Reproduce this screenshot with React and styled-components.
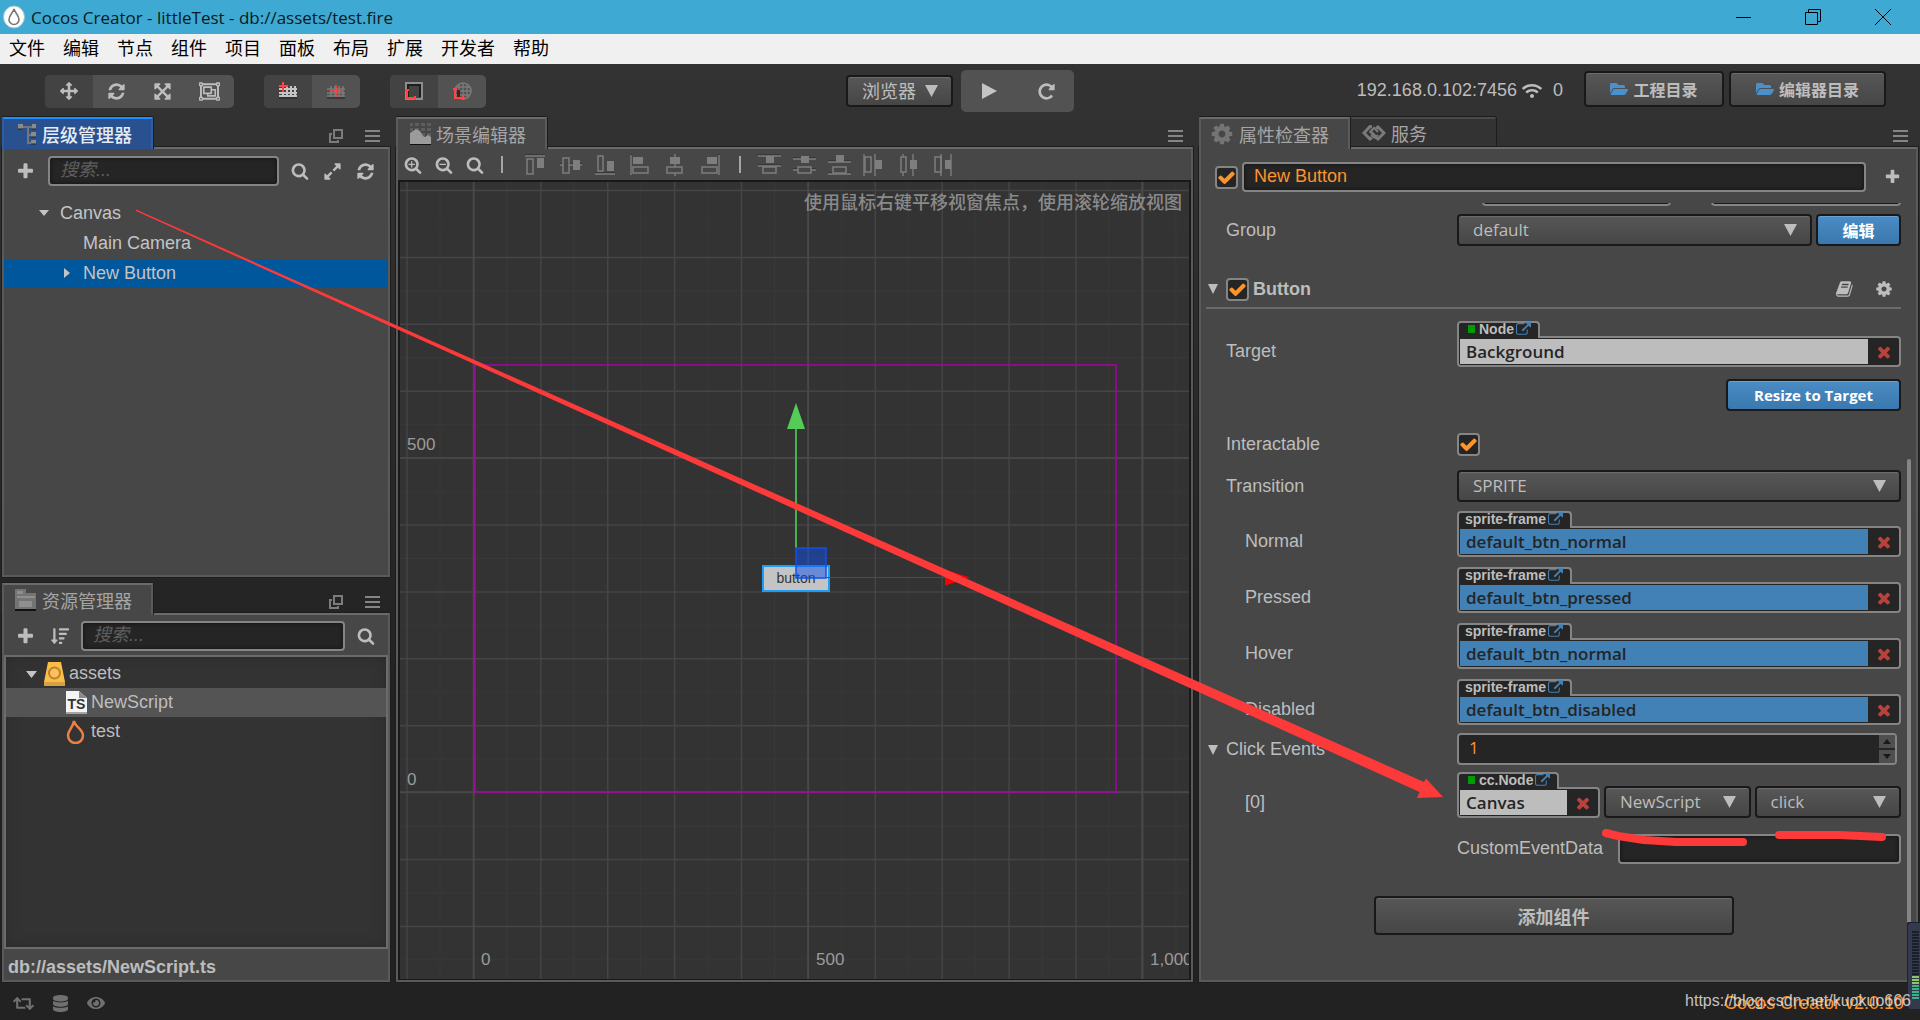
import React, { useState } from 'react';
import styled, { createGlobalStyle } from 'styled-components';
import {
  FaDatabase,
  FaEye,
  FaFolderOpen,
  FaRegObjectGroup,
  FaRetweet,
  FaSortAmountDown,
  FaWifi,
} from 'react-icons/fa';

const UI_FONT = '"Open Sans", "Noto Sans CJK SC", sans-serif';
const LABEL_FONT = '"Liberation Sans", "Noto Sans CJK SC", sans-serif';

const GlobalStyle = createGlobalStyle`
  * {
    box-sizing: border-box;
  }

  body {
    margin: 0;
    background: #222;
    color: #bdbdbd;
    font-family: ${LABEL_FONT};
    font-size: 18px;
  }

  button, input, select {
    margin: 0;
    font-family: inherit;
    font-size: inherit;
    color: inherit;
  }
`;

const ICONS = {
  plus: 'M1600 736v192q0 40-28 68t-68 28h-416v416q0 40-28 68t-68 28h-192q-40 0-68-28t-28-68v-416h-416q-40 0-68-28t-28-68v-192q0-40 28-68t68-28h416v-416q0-40 28-68t68-28h192q40 0 68 28t28 68v416h416q40 0 68 28t28 68z',
  search: 'M1216 832q0-185-131.5-316.5t-316.5-131.5-316.5 131.5-131.5 316.5 131.5 316.5 316.5 131.5 316.5-131.5 131.5-316.5zm512 832q0 52-38 90t-90 38q-54 0-90-38l-343-342q-179 124-399 124-143 0-273.5-55.5t-225-150-150-225-55.5-273.5 55.5-273.5 150-225 225-150 273.5-55.5 273.5 55.5 225 150 150 225 55.5 273.5q0 220-124 399l343 343q37 37 37 90z',
  refresh: 'M1639 1056q0 5-1 7-64 268-268 434.5t-478 166.5q-146 0-282.5-55t-243.5-157l-129 129q-19 19-45 19t-45-19-19-45v-448q0-26 19-45t45-19h448q26 0 45 19t19 45-19 45l-137 137q71 66 161 102t187 36q134 0 250-65t186-179q11-17 53-117 8-23 30-23h192q13 0 22.5 9.5t9.5 22.5zm25-800v448q0 26-19 45t-45 19h-448q-26 0-45-19t-19-45 19-45l138-138q-148-137-349-137-134 0-250 65t-186 179q-11 17-53 117-8 23-30 23h-199q-13 0-22.5-9.5t-9.5-22.5v-7q65-268 270-434.5t480-166.5q146 0 284 55.5t245 156.5l130-129q19-19 45-19t45 19 19 45z',
  repeat: 'M1664 256v448q0 26-19 45t-45 19h-448q-42 0-59-40-17-39 14-69l138-138q-148-137-349-137-104 0-198.5 40.5t-163.5 109.5-109.5 163.5-40.5 198.5 40.5 198.5 109.5 163.5 163.5 109.5 198.5 40.5q119 0 225-52t179-147q7-10 23-12 15 0 25 9l137 138q9 8 9.5 20.5t-7.5 22.5q-109 132-264 204.5t-327 72.5q-156 0-298-61t-245-164-164-245-61-298 61-298 164-245 245-164 298-61q147 0 284.5 55.5t244.5 156.5l130-129q29-31 70-14 39 17 39 59z',
  arrows: 'M1792 896q0 26-19 45l-256 256q-19 19-45 19t-45-19-19-45v-128h-384v384h128q26 0 45 19t19 45-19 45l-256 256q-19 19-45 19t-45-19l-256-256q-19-19-19-45t19-45 45-19h128v-384h-384v128q0 26-19 45t-45 19-45-19l-256-256q-19-19-19-45t19-45l256-256q19-19 45-19t45 19 19 45v128h384v-384h-128q-26 0-45-19t-19-45 19-45l256-256q19-19 45-19t45 19l256 256q19 19 19 45t-19 45-45 19h-128v384h384v-128q0-26 19-45t45-19 45 19l256 256q19 19 19 45z',
  arrowsAlt: 'M1411 541l-355 355 355 355 144-144q29-31 70-14 39 17 39 59v448q0 26-19 45t-45 19h-448q-42 0-59-40-17-39 14-69l144-144-355-355-355 355 144 144q31 30 14 69-17 40-59 40h-448q-26 0-45-19t-19-45v-448q0-42 40-59 39-17 69 14l144 144 355-355-355-355-144 144q-19 19-45 19-12 0-24-5-40-17-40-59v-448q0-26 19-45t45-19h448q42 0 59 40 17 39-14 69l-144 144 355 355 355-355-144-144q-31-30-14-69 17-40 59-40h448q26 0 45 19t19 45v448q0 42-39 59-13 5-25 5-26 0-45-19z',
  expand: 'M883 1056q0 13-10 23l-332 332 144 144q19 19 19 45t-19 45-45 19h-448q-26 0-45-19t-19-45v-448q0-26 19-45t45-19 45 19l144 144 332-332q10-10 23-10t23 10l114 114q10 10 10 23zm781-864v448q0 26-19 45t-45 19-45-19l-144-144-332 332q-10 10-23 10t-23-10l-114-114q-10-10-10-23t10-23l332-332-144-144q-19-19-19-45t19-45 45-19h448q26 0 45 19t19 45z',
  check: 'M1671 566q0 40-28 68l-724 724-136 136q-28 28-68 28t-68-28l-136-136-362-362q-28-28-28-68t28-68l136-136q28-28 68-28t68 28l294 295 656-657q28-28 68-28t68 28l136 136q28 28 28 68z',
  times: 'M1490 1322q0 40-28 68l-136 136q-28 28-68 28t-68-28l-294-294-294 294q-28 28-68 28t-68-28l-136-136q-28-28-28-68t28-68l294-294-294-294q-28-28-28-68t28-68l136-136q28-28 68-28t68 28l294 294 294-294q28-28 68-28t68 28l136 136q28 28 28 68t-28 68l-294 294 294 294q28 28 28 68z',
  link: 'M1408 928v320q0 119-84.5 203.5t-203.5 84.5h-832q-119 0-203.5-84.5t-84.5-203.5v-832q0-119 84.5-203.5t203.5-84.5h704q14 0 23 9t9 23v64q0 14-9 23t-23 9h-704q-66 0-113 47t-47 113v832q0 66 47 113t113 47h832q66 0 113-47t47-113v-320q0-14 9-23t23-9h64q14 0 23 9t9 23zm384-864v512q0 26-19 45t-45 19-45-19l-176-176-652 652q-10 10-23 10t-23-10l-114-114q-10-10-10-23t10-23l652-652-176-176q-19-19-19-45t19-45 45-19h512q26 0 45 19t19 45z',
  cog: 'M1152 896q0-106-75-181t-181-75-181 75-75 181 75 181 181 75 181-75 75-181zm512-109v222q0 12-8 23t-20 13l-185 28q-19 54-39 91 35 50 107 138 10 12 10 25t-9 23q-27 37-99 108t-94 71q-12 0-26-9l-138-108q-44 23-91 38-16 136-29 186-7 28-36 28h-222q-14 0-24.5-8.5t-11.5-21.5l-28-184q-49-16-90-37l-141 107q-10 9-25 9-14 0-25-11-126-114-165-168-7-10-7-23 0-12 8-23 15-21 51-66.5t54-70.5q-27-50-41-99l-183-27q-13-2-21-12.5t-8-23.5v-222q0-12 8-23t19-13l186-28q14-46 39-92-40-57-107-138-10-12-10-24 0-10 9-23 26-36 98.5-107.5t94.5-71.5q13 0 26 10l138 107q44-23 91-38 16-136 29-186 7-28 36-28h222q14 0 24.5 8.5t11.5 21.5l28 184q49 16 90 37l142-107q9-9 24-9 13 0 25 10 129 119 165 170 7 8 7 22 0 12-8 23-15 21-51 66.5t-54 70.5q26 50 41 98l183 28q13 2 21 12.5t8 23.5z',
  book: 'M1639 478q40 57 18 129l-275 906q-19 64-76.5 107.5t-122.5 43.5h-923q-77 0-148.5-53.5t-99.5-131.5q-24-67-2-127 0-4 3-27t4-37q1-8-3-21.500t-3-19.500q2-11 8-21t16.500-23.500 16.500-23.500q23-38 45-91.500t30-91.500q3-10 .5-30t-.5-28q3-11 17-28t17-23q21-36 42-92t25-90q1-9-2.500-32t.5-28q4-13 22-30.500t22-22.500q19-26 42.500-84.500t27.500-96.500q1-8-3-25.500t-2-26.500q2-8 9-18t18-23 17-21q8-12 16.500-30.500t15-35 16-36 19.500-32 26.500-23.500 36-11.500 47.500 5.500l-1 3q38-9 51-9h761q74 0 114 56t18 130l-274 906q-36 119-71.500 153.500t-128.500 34.500h-869q-27 0-38 15-11 16-1 43 24 70 144 70h923q29 0 56-15.500t35-41.500l300-987q7-22 5-57 38 15 59 43zm-1064 2q-4 13 2 22.500t20 9.500h608q13 0 25.500-9.500t16.500-22.500l21-64q4-13-2-22.500t-20-9.500h-608q-13 0-25.500 9.500t-16.500 22.500zm-83 256q-4 13 2 22.500t20 9.500h608q13 0 25.500-9.500t16.500-22.500l21-64q4-13-2-22.500t-20-9.500h-608q-13 0-25.500 9.500t-16.500 22.500z',
};

const Icon = ({ name, size = 20, color = 'currentColor', children }) => (
  <svg width={size} height={size} viewBox="0 0 1792 1792" fill={color} aria-hidden="true">
    <path d={ICONS[name]} />
    {children}
  </svg>
);

const Window = styled.div`
  position: relative;
  display: flex;
  flex-direction: column;
  min-height: 100vh;
  overflow: hidden;
  background: linear-gradient(#333 64px, #222 700px);
`;

const TitleBar = styled.header`
  display: flex;
  align-items: center;
  height: 34px;
  padding-left: 3px;
  gap: 6px;
  background: #3ea9d2;
  color: #0b1a20;
  font-family: ${UI_FONT};
  font-size: 17px;
`;

const TitleText = styled.span`
  flex: 1;
`;

const WindowButtons = styled.div`
  display: flex;
  padding-right: 2px;
`;

const WindowButton = styled.button`
  display: flex;
  align-items: center;
  justify-content: center;
  width: 70px;
  height: 34px;
  padding: 0;
  border: 0;
  background: none;
`;

const MenuBar = styled.nav`
  display: flex;
  align-items: center;
  gap: 18px;
  height: 30px;
  padding-left: 9px;
  background: #f0f0f0;
  color: #000;
`;

const MenuItem = styled.button`
  padding: 0;
  border: 0;
  background: none;
  font-size: 18px;
  line-height: 30px;
`;

const Toolbar = styled.div`
  display: grid;
  grid-template-columns: 1fr auto 1fr;
  height: 53px;
  padding: 6px 34px 0;
`;

const ToolbarSide = styled.div`
  display: flex;
  align-items: center;
  justify-content: ${(p) => (p.$end ? 'flex-end' : 'flex-start')};
  gap: ${(p) => p.$gap}px;
  height: 42px;
  padding-left: ${(p) => p.$inset || 0}px;
  padding-bottom: ${(p) => (p.$end ? 4 : 0)}px;
`;

const Address = styled.div`
  display: flex;
  align-items: center;
  gap: 5px;
  padding: 3px 16px 0 0;
`;

const ClientCount = styled.span`
  padding: 0 0 0 6px;
`;

const ToolGroup = styled.div`
  display: flex;
  height: ${(p) => (p.$tall ? 42 : 33)}px;
  border-radius: 5px;
  overflow: hidden;
  background: #525252;
`;

const ToolButton = styled.button`
  display: flex;
  align-items: center;
  justify-content: center;
  width: ${(p) => p.$width || 48}px;
  padding: 0;
  border: 0;
  background: ${(p) => (p.$active ? '#434343' : 'transparent')};
  color: #bdbdbd;
`;

const Button = styled.button`
  display: inline-flex;
  align-items: center;
  justify-content: center;
  gap: 5px;
  height: ${(p) => p.$height || 32}px;
  width: ${(p) => p.$width}px;
  padding: 0;
  border: 2px solid #191919;
  border-radius: 4px;
  background: ${(p) => (p.$primary ? 'linear-gradient(#4a8cc4, #3a78af)' : 'linear-gradient(#575757, #464646)')};
  box-shadow: inset 0 1px 0 ${(p) => (p.$primary ? '#69a2d2' : '#6c6c6c')};
  color: ${(p) => (p.$primary ? '#fff' : '#bdbdbd')};
  font-family: ${UI_FONT};
  font-size: ${(p) => p.$size || 16}px;
  font-weight: 700;
  white-space: nowrap;
`;

const SelectBox = styled.span`
  position: relative;
  display: block;
  flex: ${(p) => (p.$width ? 'none' : '1')};
  width: ${(p) => (p.$width ? `${p.$width}px` : 'auto')};
  min-width: 0;
  height: 32px;

  select {
    appearance: none;
    display: block;
    width: 100%;
    height: 32px;
    padding: 0 14px 1px;
    border: 2px solid #191919;
    border-radius: 4px;
    background: linear-gradient(#575757, #464646);
    box-shadow: inset 0 1px 0 #6c6c6c;
    font-family: ${UI_FONT};
    font-size: ${(p) => p.$size || 17}px;
  }

  svg {
    position: absolute;
    top: 10px;
    right: 15px;
    pointer-events: none;
  }
`;

const Select = ({ label, value, width, size }) => (
  <SelectBox $width={width} $size={size}>
    <select aria-label={label} defaultValue={value}>
      <option>{value}</option>
    </select>
    <svg width="13" height="12" viewBox="0 0 13 12" fill="#bdbdbd"><path d="M0 0h13L6.5 12z" /></svg>
  </SelectBox>
);

const Workspace = styled.main`
  display: grid;
  grid-template-columns: 388fr 797fr 719fr;
  gap: 6px;
  flex: 1;
  min-height: 0;
  padding: 0 2px;
`;

const LeftColumn = styled.div`
  display: grid;
  grid-template-rows: 460fr 399fr;
  gap: 6px;
  min-width: 0;
`;

const Panel = styled.section`
  display: flex;
  flex-direction: column;
  min-width: 0;
  min-height: 0;
`;

const TabStrip = styled.div`
  display: flex;
  height: 30px;
`;

const Tab = styled.button`
  position: relative;
  z-index: ${(p) => (p.$idle ? 0 : 1)};
  display: flex;
  align-items: center;
  gap: 5px;
  width: ${(p) => (p.$idle ? 146 : 151)}px;
  height: ${(p) => (p.$idle ? 30 : 32)}px;
  padding: 0 0 1px ${(p) => p.$pad || 12}px;
  border: 2px solid ${(p) => (p.$focused ? '#2a5ea8' : p.$idle ? '#333' : '#5a5a5a')};
  border-top-color: ${(p) => (p.$focused ? '#1e8fff' : p.$idle ? '#4a4a4a' : '#6b6b6b')};
  border-bottom: 0;
  background: ${(p) => (p.$focused ? '#29508f' : p.$idle ? '#333' : '#474747')};
  box-shadow: 0 -1px 0 #1d1d1d, 1px 0 0 #1d1d1d;
  color: ${(p) => (p.$focused ? '#e6ecf5' : '#a5a5a5')};
  font-weight: ${(p) => (p.$focused ? 500 : 400)};
  font-size: 18px;
  white-space: nowrap;
`;

const TabTools = styled.div`
  display: flex;
  align-items: center;
  gap: 22px;
  margin-left: auto;
  padding: 8px 10px 0 0;
`;

const PlainButton = styled.button`
  display: flex;
  align-items: center;
  justify-content: center;
  flex: none;
  width: ${(p) => (p.$width ? `${p.$width}px` : 'auto')};
  padding: 0;
  border: 0;
  background: none;
  color: #bdbdbd;
`;

const PanelBody = styled.div`
  display: flex;
  flex-direction: column;
  flex: 1;
  min-height: 0;
  border: 2px solid #5a5a5a;
  border-top-color: #6b6b6b;
  background: #474747;
  box-shadow: 0 0 0 1px #1d1d1d;
`;

const SearchRow = styled.div`
  display: flex;
  padding: ${(p) => p.$top}px 6px 4px 0;
`;

const TextInput = styled.input`
  flex: ${(p) => (p.$width ? 'none' : '1')};
  width: ${(p) => (p.$width ? `${p.$width}px` : '0')};
  min-width: 0;
  height: 30px;
  padding: 0 10px 2px;
  border: 2px solid #858585;
  border-radius: 4px;
  background: #252525;
  box-shadow: inset 0 0 4px #111;
  color: #fd942b;

  &::placeholder {
    color: #5e5e5e;
    font-style: italic;
  }
`;

const SearchInput = styled(TextInput)`
  margin: 0 4px 0 ${(p) => p.$left}px;
`;

const TreeList = styled.ul`
  display: flex;
  flex-direction: column;
  gap: 2px;
  margin: 9px 0 0;
  padding: 0;
  list-style: none;
`;

const TreeRow = styled.li`
  display: flex;
  align-items: center;
  height: 28px;
  padding-left: ${(p) => p.$indent}px;
  gap: 11px;
  background: ${(p) => (p.$selected ? '#00579b' : 'transparent')};
  color: #c4c4c4;
`;

const AssetList = styled.ul`
  flex: 1;
  margin: 0;
  padding: 2px 0 0;
  border: 2px solid #6b6b6b;
  background: #333;
  box-shadow: inset 0 0 12px #2a2a2a;
  list-style: none;
`;

const AssetRow = styled.li`
  display: flex;
  align-items: center;
  gap: 4px;
  height: 29px;
  padding-left: ${(p) => p.$indent}px;
  background: ${(p) => (p.$selected ? '#545454' : 'transparent')};

  span {
    padding-bottom: 1px;
  }
`;

const AssetPath = styled.div`
  padding: 5px 0 0 4px;
  font-size: 18px;
  font-weight: 700;
  line-height: 26px;
`;

const SceneTools = styled.div`
  display: flex;
  align-items: center;
  height: 31px;
  padding-left: 3px;
`;

const ZoomTools = styled.div`
  display: flex;
  gap: 8px;
`;

const SceneView = styled.div`
  position: relative;
  flex: 1;
  min-height: 0;
  border: 2px solid #191919;
  border-bottom-width: 1px;
  background: #333;
  overflow: hidden;

  svg {
    position: absolute;
    inset: 0;
    width: 100%;
    height: 100%;
  }
`;

const SceneHint = styled.p`
  position: absolute;
  top: 6px;
  right: 7px;
  margin: 0;
  color: #8a8a8a;
  font-size: 18px;
  font-weight: 500;
  line-height: 30px;
`;

const Inspector = styled(PanelBody)`
  position: relative;
  padding: 13px 15px 0 5px;
`;

const NodeRow = styled.div`
  display: flex;
  align-items: center;
  gap: 4px;
  padding-left: 9px;
`;

const AddButton = styled(PlainButton)`
  width: 31px;
  padding-left: 14px;
`;

const CheckBox = styled.span`
  position: relative;
  display: flex;
  align-items: center;
  justify-content: center;
  flex: none;
  width: 23px;
  height: 23px;

  input {
    appearance: none;
    width: 23px;
    height: 23px;
    border: 2px solid #858585;
    border-radius: 4px;
    background: #252525;
  }

  svg {
    position: absolute;
    pointer-events: none;
  }
`;

const Check = ({ label, id }) => {
  const [on, setOn] = useState(true);
  return (
    <CheckBox>
      <input id={id} type="checkbox" aria-label={label} checked={on} onChange={() => setOn(!on)} />
      {on && <Icon name="check" size={19} color="#fd942b" />}
    </CheckBox>
  );
};

const ClippedRow = styled.div`
  display: flex;
  align-items: flex-end;
  justify-content: flex-end;
  gap: 40px;
  height: 3px;
  margin-top: 11px;
  overflow: hidden;
`;

const Row = styled.div`
  display: grid;
  grid-template-columns: 251px 1fr;
  align-items: ${(p) => (p.$middle ? 'center' : 'end')};
  margin-top: ${(p) => p.$top}px;
`;

const RowLabel = styled.label`
  display: flex;
  align-items: center;
  gap: 4px;
  padding-left: ${(p) => p.$indent}px;
  line-height: 31px;
`;

const RowValue = styled.div`
  display: flex;
  align-items: flex-end;
  justify-content: ${(p) => (p.$end ? 'flex-end' : 'flex-start')};
  gap: 4px;
  min-width: 0;
`;

const DataLabel = styled.label`
  padding-right: 11px;
  line-height: 32px;
`;

const SectionHeader = styled.div`
  display: flex;
  align-items: center;
  gap: 4px;
  height: 33px;
  margin-top: 30px;
  padding: 0 8px 5px 2px;
  border-bottom: 2px solid #6b6b6b;
`;

const SectionTitle = styled.h2`
  flex: 1;
  margin: 0;
  font-size: 18px;
`;

const SectionTools = styled.div`
  display: flex;
  gap: 21px;
`;

const Field = styled.div`
  flex: ${(p) => (p.$width ? 'none' : '1')};
  width: ${(p) => (p.$width ? `${p.$width}px` : 'auto')};
  min-width: 0;
`;

const FieldTag = styled.div`
  position: relative;
  z-index: 1;
  display: flex;
  align-items: center;
  gap: 2px;
  width: fit-content;
  height: 17px;
  margin-bottom: -2px;
  padding: 0 7px 3px 6px;
  border: 2px solid #858585;
  border-bottom: 0;
  border-radius: 4px 4px 0 0;
  background: #252525;
  font-size: 14px;
  font-weight: 700;
`;

const TypeDot = styled.span`
  width: 7px;
  height: 8px;
  margin: 0 2px 0 3px;
  background: #009b00;
`;

const FieldBox = styled.div`
  display: flex;
  height: 31px;
  padding: 1px 0 1px 1px;
  border: 2px solid #858585;
  border-radius: 0 4px 4px 4px;
  background: #252525;
`;

const FieldName = styled.div`
  flex: 1;
  padding-left: 6px;
  background: ${(p) => (p.$asset ? '#4281b6' : '#bdbdbd')};
  color: #252525;
  font-family: ${UI_FONT};
  font-size: 17px;
  font-weight: 600;
  line-height: 26px;
`;

const ObjectField = ({ type, name, asset, width }) => (
  <Field $width={width}>
    <FieldTag>
      {!asset && <TypeDot />}
      {type}
      <Icon name="link" size={15} color="#4281b6" />
    </FieldTag>
    <FieldBox>
      <FieldName $asset={asset}>{name}</FieldName>
      <PlainButton $width={31} aria-label="清除">
        <Icon name="times" size={18} color="#b9423f" />
      </PlainButton>
    </FieldBox>
  </Field>
);

const NumberBox = styled.div`
  display: flex;
  flex: 1;
  height: 32px;
  margin-right: 4px;
  border: 2px solid #858585;
  border-radius: 4px;
  background: #252525;
  overflow: hidden;

  input {
    flex: 1;
    min-width: 0;
    padding: 0 0 3px 10px;
    border: 0;
    background: none;
    color: #fd942b;
    font-family: ${UI_FONT};
    font-size: 17px;
  }
`;

const Stepper = styled.div`
  display: grid;
  grid-template-rows: 1fr 1fr;
  gap: 2px;
  width: 16px;

  button {
    display: flex;
    align-items: center;
    justify-content: center;
    padding: 0;
    border: 0;
    background: #4f4f4f;
  }
`;

const AddRow = styled.div`
  display: flex;
  justify-content: center;
  margin-top: 32px;
`;

const ScrollThumb = styled.div`
  position: absolute;
  top: 310px;
  right: 5px;
  bottom: 0;
  width: 4px;
  border-radius: 2px;
  background: #858585;
`;

const StatusBar = styled.footer`
  display: flex;
  align-items: center;
  gap: 18px;
  height: 38px;
  padding: 4px 16px 0 13px;
  color: #707070;
`;

const Version = styled.span`
  margin-left: auto;
  color: #fd942b;
`;

const Watermark = styled.span`
  position: absolute;
  right: 9px;
  bottom: 8px;
  color: rgba(225, 225, 225, 0.85);
  font-size: 16px;
  line-height: 22px;
`;

const Meter = styled.svg`
  position: absolute;
  right: 0;
  bottom: 10px;
`;

const Annotation = styled.svg`
  position: absolute;
  inset: 0;
  width: 100%;
  height: 100%;
  pointer-events: none;
`;

const Hamburger = () => (
  <PlainButton aria-label="菜单">
    <svg width="15" height="12" stroke="#858585" strokeWidth="2"><path d="M0 1h15M0 6h15M0 11h15" /></svg>
  </PlainButton>
);

const PopOut = () => (
  <PlainButton aria-label="弹出">
    <svg width="14" height="14" fill="none" stroke="#7c7c7c" strokeWidth="2">
      <path d="M5 1h8v8H5zM3 5H1v8h8v-2" />
    </svg>
  </PlainButton>
);

const Logo = () => (
  <svg width="22" height="24" viewBox="0 0 22 24">
    <ellipse cx="11" cy="12" rx="10.5" ry="11" fill="#fff" stroke="#a9c3cc" />
    <path d="M11 4c1 4 5 6 5 10.5a5 5 0 0 1-10 0C6 10 10 8 11 4z" fill="#fff" stroke="#777" strokeWidth="1.6" />
  </svg>
);

const HierarchyIcon = () => (
  <svg width="20" height="22" viewBox="0 0 20 22">
    <path d="M2 4h14M11 4v16h6M11 12h6" fill="none" stroke="#767676" strokeWidth="2" />
    <path d="M1 1h5v5H1zM15 1h4v5h-4zM14 9h5v5h-5zM14 17h5v4h-5z" fill="#8b8b8b" />
    <path d="M1 6h5M15 6h4M14 14h5M14 21h5" stroke="#222" />
  </svg>
);

const SceneIcon = () => (
  <svg width="21" height="22" viewBox="0 0 21 22">
    <path d="M0 0h3v3H0zM5 0h4v3H5zM11 0h4v3h-4zM17 0h4v3h-4zM0 5h3v3H0zM5 5h4v3H5zM11 5h4v3h-4zM17 5h4v3h-4zM11 10h4v3h-4zM17 10h4v3h-4z" fill="#5e5e5e" />
    <path d="M0 21V10l3-2 3-2 4 2 3 5 2 1 3-2 3 2v7z" fill="#9b9b9b" />
    <path d="M0 21.5h21" stroke="#111" />
  </svg>
);

const AssetsIcon = () => (
  <svg width="23" height="22" viewBox="0 0 23 22">
    <path d="M1 20V0h11v4h10v16z" fill="#747474" />
    <path d="M3 2h6v3H3zM3 7h18v2H3zM5 12h13v6H5z" fill="#8f8f8f" />
    <path d="M1 21h21" stroke="#111" strokeWidth="2" />
  </svg>
);

const ServiceIcon = () => (
  <svg width="24" height="16" viewBox="0 0 24 16" fill="none" stroke="#7a7a7a" strokeWidth="3">
    <path d="M10 2 8 1.500 2 8l6 6 2-1.500M8 6l8 8 6-6-6-6-2 1.500" />
    <path d="M8 7l4-4 4 4M9 10l4 3 3-3" strokeWidth="2" />
  </svg>
);

const GridIcon = ({ bright }) => (
  <svg width="20" height="18" viewBox="0 0 20 18" fill="none">
    <path
      d="M5 4v11M9 4v11M13 4v11M17 4v11M1 7h18M1 11h18M1 14h18"
      stroke={bright ? '#c4c4c4' : '#7b7b7b'}
      strokeWidth={bright ? 2 : 1.5}
    />
    <path d="M1 16h18" stroke="#222" />
    {bright
      ? <path d="M5 0v10M1 4h9" stroke="#f44" strokeWidth="2" />
      : <path d="M10 3v12M4 9h12" stroke="#f44" strokeWidth="1.5" />}
  </svg>
);

const LocalIcon = () => (
  <svg width="20" height="20" viewBox="0 0 20 20" fill="none">
    <path d="M2 2h16v16H2z" stroke="#8d8d8d" strokeWidth="2" />
    <path d="M4 18V4h12v12" stroke="#1c1c1c" strokeWidth="2" />
    <path d="M3 8v9h9M1 9h4M11 15v4" stroke="#f44" strokeWidth="2" />
  </svg>
);

const WorldIcon = () => (
  <svg width="20" height="20" viewBox="0 0 20 20" fill="none">
    <circle cx="11" cy="10" r="8" stroke="#7b7b7b" strokeWidth="1.5" />
    <path d="M11 2v16M7 3v14M15 3v14M3 10h16M4 6h14M4 14h14" stroke="#7b7b7b" strokeWidth="1.3" />
    <path d="M5 9h3v7H5z" fill="#641414" />
    <path d="M3 7v10h10M1 8h4M11 14v5M2 17h3" stroke="#f44" strokeWidth="2" />
  </svg>
);

// Each drawing is made of outlines, filled blocks and guide lines.
const ALIGN_TOOLS = [
  { out: 'M3 5h6v15H3z', fill: 'M13 4h7v10h-7z', line: 'M1 2h20' },
  { out: 'M4 4h6v15H4z', fill: 'M14 6h7v10h-7z', line: 'M1 11h3M10 11h13' },
  { out: 'M4 2h5v15H4z', fill: 'M13 7h7v10h-7z', line: 'M1 20h20' },
  { out: 'M4 13h15v6H4z', fill: 'M4 3h10v7H4z', line: 'M2 1v20' },
  { out: 'M3 13h15v6H3z', fill: 'M6 3h10v7H6z', line: 'M11 0v13M11 19v3' },
  { out: 'M3 13h15v6H3z', fill: 'M8 3h10v7H8z', line: 'M20 1v20' },
];

const DISTRIBUTE_TOOLS = [
  { out: 'M5 13h13v6H5z', fill: 'M8 2h8v7H8z', line: 'M0 2h23M0 12h23' },
  { out: 'M5 13h13v6H5z', fill: 'M8 2h8v7H8z', line: 'M0 5h23M0 16h5M18 16h5' },
  { out: 'M5 13h13v6H5z', fill: 'M8 1h8v7H8z', line: 'M0 8h23M0 20h23' },
  { out: 'M2 3h6v15H2z', fill: 'M12 6h7v9h-7z', line: 'M1 0v22M12 0v22' },
  { out: 'M3 3h5v15H3z', fill: 'M12 6h7v9h-7z', line: 'M5 0v3M5 18v4M15 0v22' },
  { out: 'M2 3h6v15H2z', fill: 'M12 6h6v9h-6z', line: 'M8 0v22M18 0v22' },
];

const AlignButton = styled(PlainButton)`
  width: 35px;
`;

const Divider = styled.span`
  width: 2px;
  height: 17px;
  margin: 0 ${(p) => p.$side}px;
  background: #a5a5a5;
`;

const AlignTool = ({ out, fill, line }) => (
  <AlignButton aria-label="对齐">
    <svg width="24" height="22" fill="none" stroke="#7e7e7e">
      <path d={line} stroke="#2a2a2a" transform="translate(0 -1)" />
      <path d={line} strokeWidth="1.5" />
      <path d={out} strokeWidth="1.5" />
      <path d={fill} fill="#7e7e7e" stroke="none" />
    </svg>
  </AlignButton>
);

const lines = (first, step, count) => Array.from({ length: count }, (_, i) => first + step * i);

// Grid step is 66.9px for 100 scene units, origin at 74,610.
const SceneDrawing = () => (
  <svg>
    <g stroke="#393939">
      {lines(40, 66.9, 12).map((x) => <path key={x} d={`M${x} 0v900`} />)}
      {lines(42, 66.9, 12).map((y) => <path key={y} d={`M0 ${y}h900`} />)}
    </g>
    <g stroke="#454545" strokeWidth="1.5">
      {lines(7, 66.9, 12).map((x) => <path key={x} d={`M${x} 0v900`} />)}
      {lines(8.5, 66.9, 12).map((y) => <path key={y} d={`M0 ${y}h900`} />)}
    </g>
    <path d="M73.5 0v900M408 0v900M742 0v900M0 276h900M0 610h900" stroke="#4a4a4a" strokeWidth="1.5" />
    <path d="M75 183h641v427H75z" fill="none" stroke="#a0a" strokeWidth="1.5" />
    <g fill="#9b9b9b" fontFamily="Liberation Sans" fontSize="17">
      <text x="7" y="268">500</text>
      <text x="7" y="603">0</text>
      <text x="81" y="783">0</text>
      <text x="416" y="783">500</text>
      <text x="750" y="783">1,000</text>
    </g>
    <path d="M363 384h66v25h-66z" fill="#c4c4c4" stroke="#1e9df7" strokeWidth="2" />
    <text x="396" y="401" textAnchor="middle" fill="#333" fontFamily="Liberation Sans" fontSize="14">button</text>
    <path d="M396 366V245" stroke="#4caf50" strokeWidth="2" />
    <path d="M396 221l9 26h-18z" fill="#55cc55" />
    <path d="M396 366h30v30h-30z" fill="#0f50eb" fillOpacity=".5" stroke="#0f50eb" strokeWidth="1.5" />
    <path d="M427 395.5h118" stroke="#f00" />
    <path d="M545 387.500l25 8-25 8z" fill="#f00" />
  </svg>
);

const SPRITES = [
  { label: 'Normal', name: 'default_btn_normal' },
  { label: 'Pressed', name: 'default_btn_pressed' },
  { label: 'Hover', name: 'default_btn_normal' },
  { label: 'Disabled', name: 'default_btn_disabled' },
];

const MENUS = ['文件', '编辑', '节点', '组件', '项目', '面板', '布局', '扩展', '开发者', '帮助'];

const Triangle = () => (
  <svg width="14" height="10" fill="#bdbdbd"><path d="M0 0h10L5 10z" /></svg>
);

const Header = () => (
  <>
    <TitleBar>
      <Logo />
      <TitleText>Cocos Creator - littleTest - db://assets/test.fire</TitleText>
      <WindowButtons>
        <WindowButton aria-label="最小化">
          <svg width="15" height="15" stroke="#000"><path d="M0 7.5h15" /></svg>
        </WindowButton>
        <WindowButton aria-label="还原">
          <svg width="16" height="16" fill="none" stroke="#000"><path d="M.5 3.5h12v12H.5zM3.5 3.5v-3h12v12h-3" /></svg>
        </WindowButton>
        <WindowButton aria-label="关闭">
          <svg width="16" height="16" stroke="#000"><path d="M0 0l16 16M16 0L0 16" /></svg>
        </WindowButton>
      </WindowButtons>
    </TitleBar>
    <MenuBar>
      {MENUS.map((m) => <MenuItem key={m}>{m}</MenuItem>)}
    </MenuBar>
    <Toolbar>
      <ToolbarSide $gap={30} $inset={11}>
        <ToolGroup>
          <ToolButton $active aria-label="移动"><Icon name="arrows" size={18} /></ToolButton>
          <ToolButton $width={46} aria-label="旋转"><Icon name="refresh" size={19} /></ToolButton>
          <ToolButton $width={46} aria-label="缩放"><Icon name="arrowsAlt" size={19} /></ToolButton>
          <ToolButton $width={49} aria-label="矩形"><FaRegObjectGroup size={21} /></ToolButton>
        </ToolGroup>
        <ToolGroup>
          <ToolButton $active aria-label="锚点"><GridIcon bright /></ToolButton>
          <ToolButton aria-label="中心点"><GridIcon /></ToolButton>
        </ToolGroup>
        <ToolGroup>
          <ToolButton $active aria-label="本地坐标"><LocalIcon /></ToolButton>
          <ToolButton aria-label="世界坐标"><WorldIcon /></ToolButton>
        </ToolGroup>
      </ToolbarSide>
      <ToolbarSide $gap={8}>
        <Select label="预览平台" value="浏览器" width={107} size={18} />
        <ToolGroup $tall>
          <ToolButton $width={57} aria-label="预览">
            <svg width="15" height="16" fill="#c4c4c4"><path d="M0 0l15 8-15 8z" /></svg>
          </ToolButton>
          <ToolButton $width={56} aria-label="刷新"><Icon name="repeat" size={19} /></ToolButton>
        </ToolGroup>
      </ToolbarSide>
      <ToolbarSide $end $gap={5}>
        <Address>
          192.168.0.102:7456
          <FaWifi size={20} />
          <ClientCount>0</ClientCount>
        </Address>
        <Button $height={36} $width={140}><FaFolderOpen size={18} color="#4a90cc" />工程目录</Button>
        <Button $height={36} $width={157}><FaFolderOpen size={18} color="#4a90cc" />编辑器目录</Button>
      </ToolbarSide>
    </Toolbar>
  </>
);

const Hierarchy = () => (
  <Panel>
    <TabStrip>
      <Tab $focused $pad={13}><HierarchyIcon />层级管理器</Tab>
      <TabTools><PopOut /><Hamburger /></TabTools>
    </TabStrip>
    <PanelBody>
      <SearchRow $top={7}>
        <PlainButton $width={42} aria-label="新建节点"><Icon name="plus" size={19} /></PlainButton>
        <SearchInput $left={2} placeholder="搜索..." aria-label="搜索节点" />
        <PlainButton $width={33} aria-label="搜索"><Icon name="search" size={18} /></PlainButton>
        <PlainButton $width={33} aria-label="展开"><Icon name="expand" size={19} /></PlainButton>
        <PlainButton $width={33} aria-label="刷新"><Icon name="refresh" size={19} /></PlainButton>
      </SearchRow>
      <TreeList>
        <TreeRow $indent={35}>
          <svg width="10" height="6" fill="#c4c4c4"><path d="M0 0h10L5 6z" /></svg>
          Canvas
        </TreeRow>
        <TreeRow $indent={79}>Main Camera</TreeRow>
        <TreeRow $indent={60} $selected>
          <svg width="8" height="10" fill="#c4c4c4"><path d="M0 0l6 5-6 5z" /></svg>
          New Button
        </TreeRow>
      </TreeList>
    </PanelBody>
  </Panel>
);

const Assets = () => (
  <Panel>
    <TabStrip>
      <Tab $pad={10}><AssetsIcon />资源管理器</Tab>
      <TabTools><PopOut /><Hamburger /></TabTools>
    </TabStrip>
    <PanelBody>
      <SearchRow $top={6}>
        <PlainButton $width={42} aria-label="新建资源"><Icon name="plus" size={19} /></PlainButton>
        <PlainButton $width={27} aria-label="排序"><FaSortAmountDown size={18} /></PlainButton>
        <SearchInput $left={8} placeholder="搜索..." aria-label="搜索资源" />
        <PlainButton $width={33} aria-label="搜索"><Icon name="search" size={18} /></PlainButton>
      </SearchRow>
      <AssetList>
        <AssetRow $indent={18}>
          <svg width="16" height="8" fill="#c4c4c4"><path d="M2 1h11L7.5 8z" /></svg>
          <svg width="21" height="24">
            <path d="M4 0h13l4 20v4H0v-4z" fill="#fbbd46" />
            <path d="M0 20h21v4H0z" fill="#d8a045" />
            <circle cx="10.5" cy="11" r="5.5" fill="#fdbf60" stroke="#b9822c" strokeWidth="2" />
          </svg>
          <span>assets</span>
        </AssetRow>
        <AssetRow $indent={60} $selected>
          <svg width="21" height="24">
            <path d="M0 0h13l8 7v14H0z" fill="#f4f4f4" />
            <path d="M13 0v7h8z" fill="#8a8a8a" />
            <path d="M0 21h21v2H0z" fill="#a5a5a5" />
            <text x="10.5" y="18" textAnchor="middle" fill="#333" fontSize="14" fontWeight="700" fontFamily="Liberation Sans">TS</text>
          </svg>
          <span>NewScript</span>
        </AssetRow>
        <AssetRow $indent={60}>
          <svg width="21" height="24" fill="none">
            <path d="M8 1c1 6 9 8 9 14.5a7.500 7.500 0 0 1-15 0C2 10 7 8 8 1z" stroke="#ee8043" strokeWidth="2.5" />
          </svg>
          <span>test</span>
        </AssetRow>
      </AssetList>
      <AssetPath>db://assets/NewScript.ts</AssetPath>
    </PanelBody>
  </Panel>
);

const Scene = () => (
  <Panel>
    <TabStrip>
      <Tab $pad={12}><SceneIcon />场景编辑器</Tab>
      <TabTools><Hamburger /></TabTools>
    </TabStrip>
    <PanelBody>
      <SceneTools>
        <ZoomTools>
          <PlainButton $width={23} aria-label="放大">
            <Icon name="search" size={18}><path d="M704 512h128v256h256v128H832v256H704V896H448V768h256z" /></Icon>
          </PlainButton>
          <PlainButton $width={23} aria-label="缩小">
            <Icon name="search" size={18}><path d="M448 768h640v128H448z" /></Icon>
          </PlainButton>
          <PlainButton $width={23} aria-label="还原"><Icon name="search" size={18} /></PlainButton>
        </ZoomTools>
        <Divider $side={15} />
        {ALIGN_TOOLS.map((t) => <AlignTool key={t.out + t.fill} {...t} />)}
        <Divider $side={11} />
        {DISTRIBUTE_TOOLS.map((t) => <AlignTool key={t.line} {...t} />)}
      </SceneTools>
      <SceneView>
        <SceneDrawing />
        <SceneHint>使用鼠标右键平移视窗焦点，使用滚轮缩放视图</SceneHint>
      </SceneView>
    </PanelBody>
  </Panel>
);

const Properties = () => (
  <Panel>
    <TabStrip>
      <Tab $pad={9}><Icon name="cog" size={24} color="#747474" />属性检查器</Tab>
      <Tab $idle $pad={10}><ServiceIcon />服务</Tab>
      <TabTools><Hamburger /></TabTools>
    </TabStrip>
    <Inspector>
      <NodeRow>
        <Check label="启用节点" />
        <TextInput defaultValue="New Button" aria-label="节点名称" />
        <AddButton aria-label="添加"><Icon name="plus" size={18} /></AddButton>
      </NodeRow>
      <ClippedRow>
        <TextInput $width={189} aria-label="Skew X" />
        <TextInput $width={190} aria-label="Skew Y" />
      </ClippedRow>
      <Row $top={8}>
        <RowLabel $indent={20}>Group</RowLabel>
        <RowValue>
          <Select label="Group" value="default" />
          <Button $primary $width={85}>编辑</Button>
        </RowValue>
      </Row>
      <SectionHeader>
        <Triangle />
        <Check label="启用 Button" />
        <SectionTitle>Button</SectionTitle>
        <SectionTools>
          <PlainButton aria-label="文档"><Icon name="book" size={18} /></PlainButton>
          <PlainButton aria-label="设置"><Icon name="cog" size={18} /></PlainButton>
        </SectionTools>
      </SectionHeader>
      <Row $top={12}>
        <RowLabel $indent={20}>Target</RowLabel>
        <RowValue><ObjectField type="Node" name="Background" /></RowValue>
      </Row>
      <Row $top={12}>
        <span />
        <RowValue $end><Button $primary $width={175} $size={15}>Resize to Target</Button></RowValue>
      </Row>
      <Row $top={18} $middle>
        <RowLabel $indent={20} htmlFor="interactable">Interactable</RowLabel>
        <RowValue><Check id="interactable" label="Interactable" /></RowValue>
      </Row>
      <Row $top={10}>
        <RowLabel $indent={20}>Transition</RowLabel>
        <RowValue><Select label="Transition" value="SPRITE" /></RowValue>
      </Row>
      {SPRITES.map((s, i) => (
        <Row key={s.label} $top={i ? 10 : 9}>
          <RowLabel $indent={39}>{s.label}</RowLabel>
          <RowValue><ObjectField type="sprite-frame" name={s.name} asset /></RowValue>
        </Row>
      ))}
      <Row $top={8}>
        <RowLabel $indent={2} htmlFor="clickEvents"><Triangle />Click Events</RowLabel>
        <RowValue>
          <NumberBox>
            <input id="clickEvents" defaultValue="1" />
            <Stepper>
              <button aria-label="增加"><svg width="8" height="5" fill="#191919"><path d="M0 5h8L4 0z" /></svg></button>
              <button aria-label="减少"><svg width="8" height="5" fill="#191919"><path d="M0 0h8L4 5z" /></svg></button>
            </Stepper>
          </NumberBox>
        </RowValue>
      </Row>
      <Row $top={7}>
        <RowLabel $indent={39}>[0]</RowLabel>
        <RowValue>
          <ObjectField type="cc.Node" name="Canvas" width={143} />
          <Select label="组件" value="NewScript" />
          <Select label="方法" value="click" />
        </RowValue>
      </Row>
      <Row $top={14}>
        <span />
        <RowValue>
          <DataLabel htmlFor="customData">CustomEventData</DataLabel>
          <TextInput id="customData" />
        </RowValue>
      </Row>
      <AddRow><Button $height={39} $width={360} $size={18}>添加组件</Button></AddRow>
      <ScrollThumb />
    </Inspector>
  </Panel>
);

const App = () => (
  <Window>
    <GlobalStyle />
    <Header />
    <Workspace>
      <LeftColumn>
        <Hierarchy />
        <Assets />
      </LeftColumn>
      <Scene />
      <Properties />
    </Workspace>
    <StatusBar>
      <FaRetweet size={21} />
      <FaDatabase size={17} />
      <FaEye size={18} />
      <Version>Cocos Creator v2.0.10</Version>
    </StatusBar>
    <Meter width="13" height="88" viewBox="0 0 13 88">
      <rect width="20" height="88" rx="4" fill="#343a4e" stroke="#1b2233" strokeWidth="2" />
      {lines(10, 3, 15).map((y) => <path key={y} d={`M5 ${y}h7`} stroke="#1b1f2b" strokeWidth="2" />)}
      {lines(55, 3, 8).map((y, i) => <path key={y} d={`M5 ${y}h7`} stroke={i < 3 ? '#8fc46a' : '#3fae8c'} strokeWidth="2" />)}
    </Meter>
    <Annotation viewBox="0 0 1920 1020" preserveAspectRatio="none">
      <path d="M136 209.5L1424 782l2-3.5 17 18.5-26 1 2.500-6L136 211z" fill="#fd3a3a" />
      <g fill="none" stroke="#fd3a3a" strokeWidth="8" strokeLinecap="round" strokeLinejoin="round">
        <path d="M1606 833l12 3 26 4 32 2h67" />
        <path d="M1779 835h60l43 2" />
      </g>
    </Annotation>
    <Watermark>https://blog.csdn.net/kuokuo666</Watermark>
  </Window>
);

export default App;
